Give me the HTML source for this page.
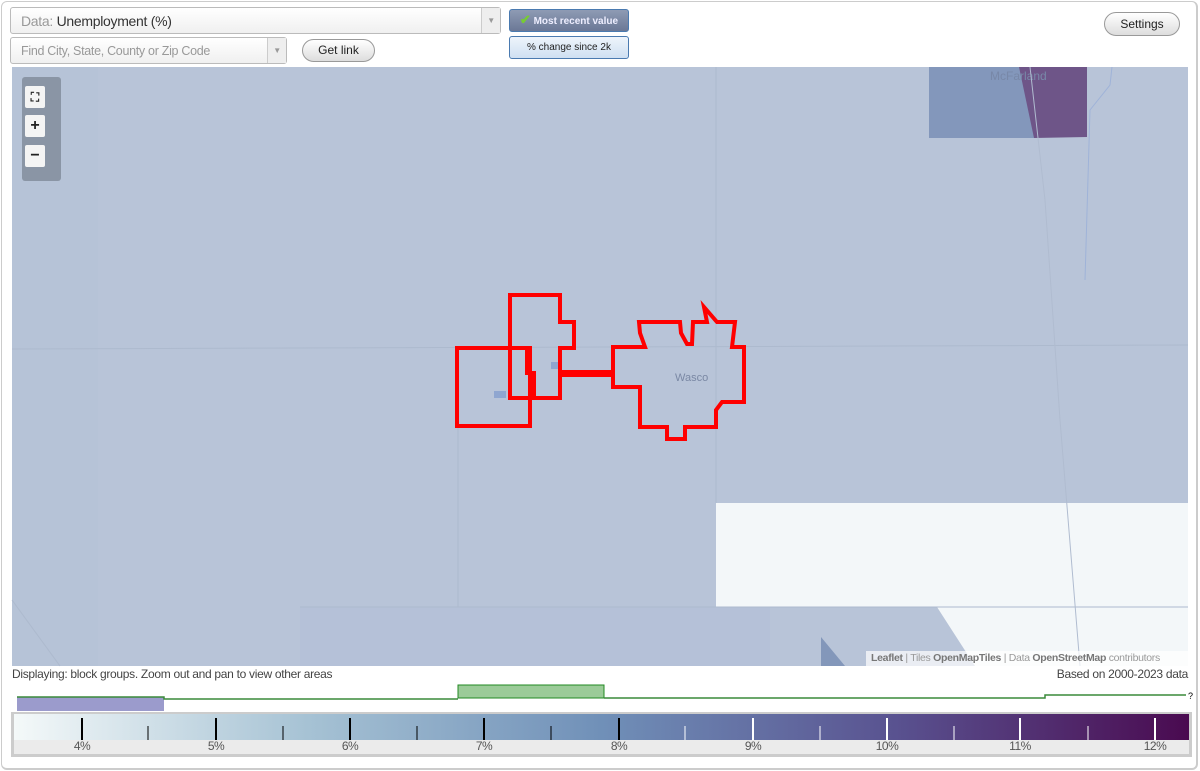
<!DOCTYPE html>
<html><head><meta charset="utf-8"><style>
body{margin:0;width:1200px;height:771px;background:#fff;font-family:"Liberation Sans",sans-serif;overflow:hidden;position:relative}
.frame{position:absolute;left:1px;top:1px;width:1194px;height:766px;border:1px solid #ccc;border-radius:6px;border-width:1px 2px 2px 1px}
.sel{position:absolute;background:linear-gradient(#fff,#f0f0f0);border:1px solid #bbb;border-radius:3px;font-size:14px;color:#999;box-sizing:border-box}
.arrow{position:absolute;right:0;top:0;bottom:0;width:18px;border-left:1px solid #ccc;background:#eee;color:#999;font-size:8px;text-align:center}
.btn{position:absolute;border:1px solid #999;border-radius:12px;background:linear-gradient(#fff,#ddd);font-size:12px;color:#222;text-align:center;box-sizing:border-box}
.tg{position:absolute;border:1px solid #4a7ab0;border-radius:3px;font-size:10px;text-align:center;box-sizing:border-box}
.ctl{position:absolute;left:25px;width:20px;height:22px;background:#f4f4f4;border-radius:2px;font-weight:bold;text-align:center;font-size:16px;line-height:22px;color:#222}
.lab{position:absolute;top:739px;font-size:12px;color:#555;width:40px;margin-left:-20px;text-align:center;letter-spacing:-0.5px}
</style></head><body>
<div class="frame"></div>
<div class="sel" style="left:10px;top:7px;width:491px;height:27px;padding:5px 10px;font-size:14px;letter-spacing:-0.3px">Data: <span style="color:#333">Unemployment (%)</span><div class="arrow" style="line-height:25px">▼</div></div>
<div class="sel" style="left:10px;top:37px;width:277px;height:27px;padding:6px 10px;font-size:12.5px;letter-spacing:-0.3px">Find City, State, County or Zip Code<div class="arrow" style="line-height:25px">▼</div></div>
<div class="btn" style="left:302px;top:39px;width:73px;height:23px;line-height:21px">Get link</div>
<div class="btn" style="left:1104px;top:12px;width:76px;height:24px;line-height:22px">Settings</div>
<div class="tg" style="left:509px;top:9px;width:120px;height:23px;line-height:20px;background:linear-gradient(#8e9bb4,#6b7896);color:#eef;font-weight:bold"><span style="color:#7c3;font-size:13px">✔</span> Most recent value</div>
<div class="tg" style="left:509px;top:36px;width:120px;height:23px;line-height:21px;background:linear-gradient(#eef4fb,#cfe0f2);color:#222">% change since 2k</div>

<svg style="position:absolute;left:0;top:0" width="1200" height="771">
<rect x="12" y="67" width="1176" height="599" fill="#b8c4d8"/>
<rect x="12" y="67" width="86" height="599" fill="#b6c3d7"/>
<rect x="300" y="607" width="470" height="59" fill="#b5c1d8"/>
<polygon points="716,503 1188,503 1188,666 975,666 937,607 716,607" fill="#f3f7f9"/>
<polygon points="821,637 845,666 821,666" fill="#8397ba"/>
<rect x="929" y="67" width="105" height="71" fill="#8397bb"/>
<polygon points="1019,67 1087,67 1087,137 1034,138" fill="#6e5588"/>
<text x="990" y="80" font-size="12" fill="#7888a8" font-family="Liberation Sans">McFarland</text>
<g stroke="#adbace" stroke-width="1" fill="none">
<line x1="12" y1="349" x2="1188" y2="345"/><line x1="716" y1="67" x2="716" y2="503"/>
<line x1="458" y1="349" x2="458" y2="607"/><line x1="300" y1="607" x2="1188" y2="607"/>
<path d="M1030,67 L1045,200 L1060,420 L1080,666" stroke="#b0bcd0"/>
<path d="M12,600 L60,666"/>
</g>
<path d="M1112,67 L1110,85 L1090,110 L1085,280" stroke="#9fb3d8" fill="none"/>
<rect x="494" y="391" width="12" height="7" fill="#8fa6d0"/>
<rect x="551" y="362" width="8" height="7" fill="#8fa6d0"/>
<text x="675" y="381" font-size="11" fill="#7a88a4" font-family="Liberation Sans">Wasco</text>
<g fill="none" stroke="#ff0000" stroke-width="4" stroke-linejoin="miter">
<polygon points="457,348 530,348 530,426 457,426"/>
<polygon points="510,295 560,295 560,322 574,322 574,348 560,348 560,398 510,398"/>
<polyline points="510,348 527,348 527,373 534,373 534,398"/>
<polygon points="613,347 645,347 640,333 639,322 680,322 681,333 687,344 692,344 693,322 707,322 704,307 717,322 735,322 732,347 744,347 744,402 722,402 716,410 716,427 685,427 685,439 667,439 667,427 640,427 640,387 613,387"/>
</g>
<rect x="560" y="370" width="54" height="7" fill="#ff0000"/>
<rect x="22" y="77" width="39" height="104" rx="3" fill="#7f8a99" opacity="0.8"/>
<!-- histogram -->
<rect x="17" y="697" width="147" height="14" fill="#9b9bcc"/>
<rect x="458" y="685" width="146" height="13" fill="#9bcb98" stroke="#228822"/>
<path d="M17,697 L164,697 L164,699 L458,699 M604,698 L1045,698 L1045,695 L1186,695" stroke="#3a8a3a" fill="none" stroke-width="1.5"/>
<text x="1188" y="699" font-size="9" font-family="Liberation Sans">?</text>
<rect x="11" y="712" width="1181" height="45" fill="#ccc"/>
<defs><linearGradient id="g"><stop offset="0" stop-color="#f4f9f9"/><stop offset="0.25" stop-color="#a6c2d4"/><stop offset="0.5" stop-color="#7090b8"/><stop offset="0.75" stop-color="#595290"/><stop offset="1" stop-color="#4a0a50"/></linearGradient></defs>
<rect x="14" y="714" width="1175" height="26" fill="url(#g)"/>
<rect x="14" y="740" width="1175" height="14" fill="#ebebeb"/>
<g stroke-width="2">
<line x1="82" y1="718" x2="82" y2="740" stroke="#000"/><line x1="216" y1="718" x2="216" y2="740" stroke="#000"/><line x1="350" y1="718" x2="350" y2="740" stroke="#000"/><line x1="484" y1="718" x2="484" y2="740" stroke="#000"/><line x1="619" y1="718" x2="619" y2="740" stroke="#000"/>
<line x1="753" y1="718" x2="753" y2="740" stroke="#fff"/><line x1="887" y1="718" x2="887" y2="740" stroke="#fff"/><line x1="1020" y1="718" x2="1020" y2="740" stroke="#fff"/><line x1="1155" y1="718" x2="1155" y2="740" stroke="#fff"/>
</g>
<g stroke-width="1">
<line x1="148" y1="726" x2="148" y2="740" stroke="#000"/><line x1="283" y1="726" x2="283" y2="740" stroke="#000"/><line x1="417" y1="726" x2="417" y2="740" stroke="#000"/><line x1="551" y1="726" x2="551" y2="740" stroke="#000"/>
<line x1="685" y1="726" x2="685" y2="740" stroke="#fff"/><line x1="820" y1="726" x2="820" y2="740" stroke="#fff"/><line x1="954" y1="726" x2="954" y2="740" stroke="#fff"/><line x1="1088" y1="726" x2="1088" y2="740" stroke="#fff"/>
</g>
</svg>
<div class="ctl" style="top:86px;font-size:12px">⛶</div>
<div class="ctl" style="top:115px">+</div>
<div class="ctl" style="top:145px">−</div>
<div style="position:absolute;left:866px;top:651px;width:322px;height:15px;background:rgba(255,255,255,.7);font-size:10.5px;color:#999;line-height:15px;padding-left:5px;box-sizing:border-box;letter-spacing:-0.3px"><b style="color:#777">Leaflet</b> | Tiles <b style="color:#777">OpenMapTiles</b> | Data <b style="color:#777">OpenStreetMap</b> contributors</div>
<div style="position:absolute;left:12px;top:667px;font-size:12px;color:#444;letter-spacing:-0.3px">Displaying: block groups. Zoom out and pan to view other areas</div>
<div style="position:absolute;right:12px;top:667px;font-size:12px;color:#444;letter-spacing:-0.3px">Based on 2000-2023 data</div>
<div class="lab" style="left:82px">4%</div><div class="lab" style="left:216px">5%</div><div class="lab" style="left:350px">6%</div><div class="lab" style="left:484px">7%</div><div class="lab" style="left:619px">8%</div><div class="lab" style="left:753px">9%</div><div class="lab" style="left:887px">10%</div><div class="lab" style="left:1020px">11%</div><div class="lab" style="left:1155px">12%</div>
</body></html>
